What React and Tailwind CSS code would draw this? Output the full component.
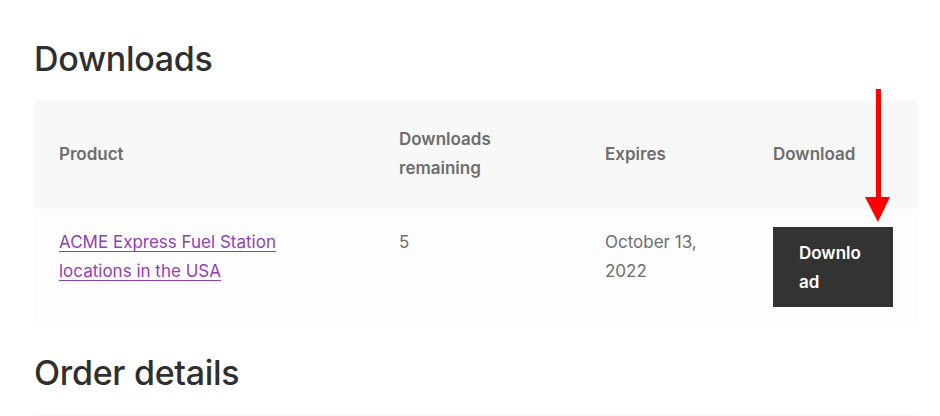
import React from "react";

export default function App() {
  return (
    <div className="relative w-[940px] h-[416px] overflow-hidden bg-white font-['Inter','Liberation_Sans',sans-serif] text-[17px]">
      <div className="pl-[34px] pr-[22px] pt-[37px]">
        <h2 className="text-[34px] leading-[44px] font-medium text-[#2f2f2f] tracking-[-0.3px]">Downloads</h2>
        <table className="mt-[18px] w-[884px] table-fixed border-collapse">
          <colgroup>
            <col className="w-[340px]" />
            <col className="w-[206px]" />
            <col className="w-[168px]" />
            <col className="w-[170px]" />
          </colgroup>
          <thead>
            <tr className="bg-[#f8f8f8] h-[110px]">
              <th className="pl-[25px] text-left align-middle font-semibold text-[#6d6d6d] leading-[29px]">Product</th>
              <th className="pl-[25px] text-left align-middle font-semibold text-[#6d6d6d] leading-[29px]">Downloads<br />remaining</th>
              <th className="pl-[25px] text-left align-middle font-semibold text-[#6d6d6d] leading-[29px]">Expires</th>
              <th className="pl-[25px] text-left align-middle font-semibold text-[#6d6d6d] leading-[29px]">Download</th>
            </tr>
          </thead>
          <tbody>
            <tr className="bg-[#fdfdfd] h-[116px]">
              <td className="pl-[25px] pt-[19px] align-top leading-[29px]">
                <a href="#" className="text-[#913fb5] underline underline-offset-[3px] decoration-1">ACME Express Fuel Station<br />locations in the USA</a>
              </td>
              <td className="pl-[25px] pt-[19px] align-top leading-[29px] text-[#6d6d6d]">5</td>
              <td className="pl-[25px] pt-[19px] align-top leading-[29px] text-[#6d6d6d]">October 13,<br />2022</td>
              <td className="pl-[25px] pt-[18px] pb-[18px] align-top">
                <a href="#" className="block w-[120px] h-[80px] bg-[#333333] text-white font-semibold px-[26px] pt-[12px] pb-[10px] leading-[29px] break-all">Download</a>
              </td>
            </tr>
          </tbody>
        </table>
        <h2 className="mt-[26px] text-[34px] leading-[44px] font-medium text-[#2f2f2f] tracking-[-0.3px]">Order details</h2>
        <div className="mt-[19px] h-[10px] w-[884px] bg-[#f8f8f8]"></div>
      </div>
      <svg className="absolute left-[864px] top-[88px]" width="28" height="136" viewBox="0 0 28 136">
        <rect x="12" y="1" width="5" height="112" fill="#ff0000" />
        <polygon points="1,109 26,109 14,134" fill="#ff0000" />
      </svg>
    </div>
  );
}
